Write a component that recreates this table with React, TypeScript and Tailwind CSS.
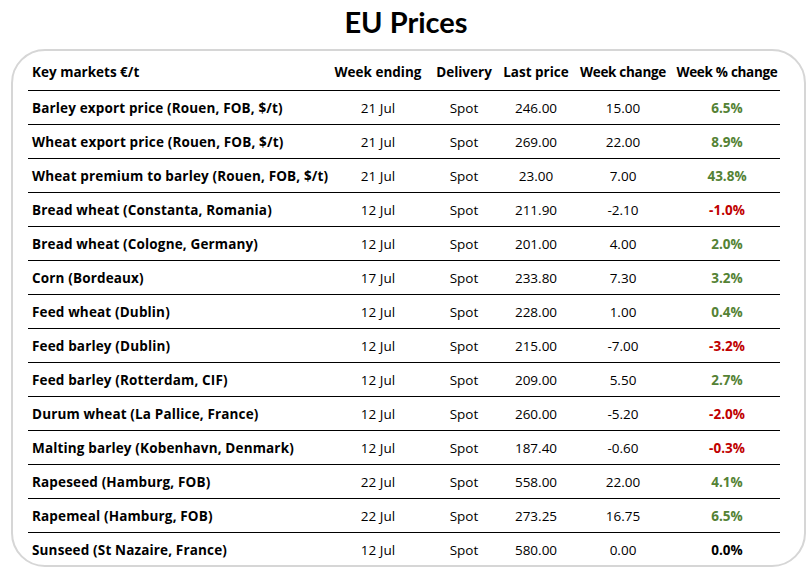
const font = { fontFamily: "'Open Sans', Lato, sans-serif" };

type Row = {
  market: string;
  week: string;
  last: string;
  change: string;
  pct: string;
  tone: 'up' | 'down' | 'flat';
};

const rows: Row[] = [
  { market: 'Barley export price (Rouen, FOB, $/t)', week: '21 Jul', last: '246.00', change: '15.00', pct: '6.5%', tone: 'up' },
  { market: 'Wheat export price (Rouen, FOB, $/t)', week: '21 Jul', last: '269.00', change: '22.00', pct: '8.9%', tone: 'up' },
  { market: 'Wheat premium to barley (Rouen, FOB, $/t)', week: '21 Jul', last: '23.00', change: '7.00', pct: '43.8%', tone: 'up' },
  { market: 'Bread wheat (Constanta, Romania)', week: '12 Jul', last: '211.90', change: '-2.10', pct: '-1.0%', tone: 'down' },
  { market: 'Bread wheat (Cologne, Germany)', week: '12 Jul', last: '201.00', change: '4.00', pct: '2.0%', tone: 'up' },
  { market: 'Corn (Bordeaux)', week: '17 Jul', last: '233.80', change: '7.30', pct: '3.2%', tone: 'up' },
  { market: 'Feed wheat (Dublin)', week: '12 Jul', last: '228.00', change: '1.00', pct: '0.4%', tone: 'up' },
  { market: 'Feed barley (Dublin)', week: '12 Jul', last: '215.00', change: '-7.00', pct: '-3.2%', tone: 'down' },
  { market: 'Feed barley (Rotterdam, CIF)', week: '12 Jul', last: '209.00', change: '5.50', pct: '2.7%', tone: 'up' },
  { market: 'Durum wheat (La Pallice, France)', week: '12 Jul', last: '260.00', change: '-5.20', pct: '-2.0%', tone: 'down' },
  { market: 'Malting barley (Kobenhavn, Denmark)', week: '12 Jul', last: '187.40', change: '-0.60', pct: '-0.3%', tone: 'down' },
  { market: 'Rapeseed (Hamburg, FOB)', week: '22 Jul', last: '558.00', change: '22.00', pct: '4.1%', tone: 'up' },
  { market: 'Rapemeal (Hamburg, FOB)', week: '22 Jul', last: '273.25', change: '16.75', pct: '6.5%', tone: 'up' },
  { market: 'Sunseed (St Nazaire, France)', week: '12 Jul', last: '580.00', change: '0.00', pct: '0.0%', tone: 'flat' },
];

const toneClass = {
  up: 'text-[#548235]',
  down: 'text-[#c00000]',
  flat: 'text-black',
};

const cols = 'grid grid-cols-[300px_100px_72px_72px_102px_106px] items-center';

export default function App() {
  return (
    <div className="w-[812px] h-[571px] bg-white text-black overflow-hidden" style={font}>
      <h1
        className="text-center text-[29px] font-bold leading-[36px] pt-1 text-black"
        style={{ fontFamily: "Lato, sans-serif" }}
      >
        EU Prices
      </h1>
      <div className="ml-[11px] mt-[9px] w-[795px] h-[518px] rounded-[34px] border-2 border-[#d6d6d6] pl-[15px]">
        <div className={`${cols} h-[40px] w-[752px] border-b border-black text-[13.5px] font-bold`}>
          <div className="pl-1 pt-[3px]">Key markets €/t</div>
          <div className="text-center pt-[3px]">Week ending</div>
          <div className="text-center pt-[3px]">Delivery</div>
          <div className="text-center pt-[3px]">Last price</div>
          <div className="text-center pt-[3px] whitespace-nowrap tracking-[-0.3px]">Week change</div>
          <div className="text-center pt-[3px] whitespace-nowrap tracking-[-0.3px]">Week % change</div>
        </div>
        {rows.map((r, i) => (
          <div
            key={r.market}
            className={`${cols} h-[34px] w-[752px] text-[13.5px] ${i < rows.length - 1 ? 'border-b border-black' : ''}`}
          >
            <div className="pl-1 pt-[1px] font-bold whitespace-nowrap tracking-[0.15px]">{r.market}</div>
            <div className="text-center pt-[1px]">{r.week}</div>
            <div className="text-center pt-[1px]">Spot</div>
            <div className="text-center pt-[1px]">{r.last}</div>
            <div className="text-center pt-[1px]">{r.change}</div>
            <div className={`text-center pt-[1px] font-bold ${toneClass[r.tone]}`}>{r.pct}</div>
          </div>
        ))}
      </div>
    </div>
  );
}
